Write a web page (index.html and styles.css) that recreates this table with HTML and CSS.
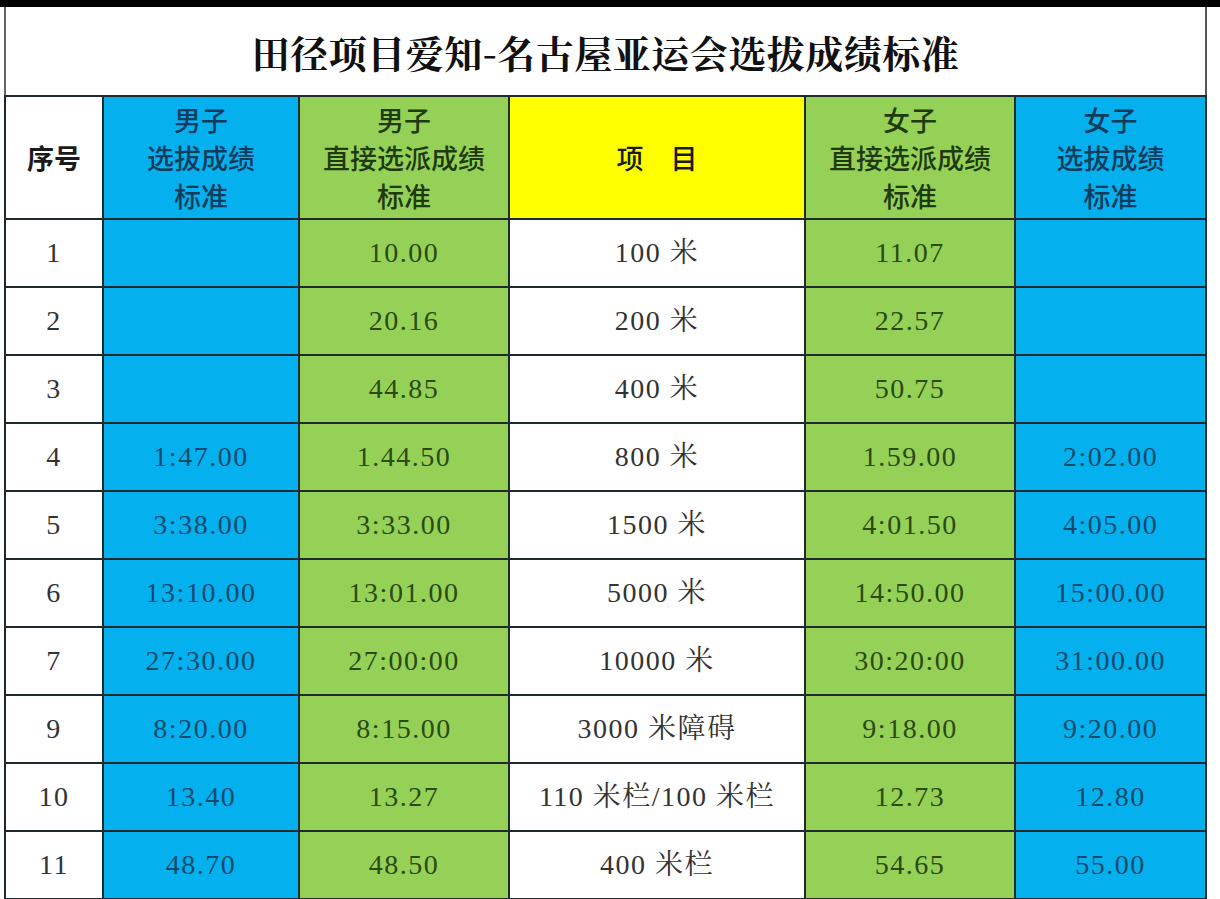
FILE: index.html
```html
<!DOCTYPE html>
<html lang="zh">
<head>
<meta charset="utf-8">
<title>田径项目爱知-名古屋亚运会选拔成绩标准</title>
<link rel="stylesheet" href="styles.css">
</head>
<body>
<div class="topbar"></div>
<table class="grid">
  <colgroup>
    <col class="c-no">
    <col class="c-m1">
    <col class="c-m2">
    <col class="c-ev">
    <col class="c-w2">
    <col class="c-w1">
  </colgroup>
  <tr class="title-row">
    <td colspan="6" class="title">田径项目爱知-名古屋亚运会选拔成绩标准</td>
  </tr>
  <tr class="head-row">
    <th class="white">序号</th>
    <th class="blue">男子<br>选拔成绩<br>标准</th>
    <th class="green">男子<br>直接选派成绩<br>标准</th>
    <th class="yellow">项&emsp;目</th>
    <th class="green">女子<br>直接选派成绩<br>标准</th>
    <th class="blue">女子<br>选拔成绩<br>标准</th>
  </tr>
  <tr><td class="white">1</td><td class="blue"></td><td class="green">10.00</td><td class="white">100 米</td><td class="green">11.07</td><td class="blue"></td></tr>
  <tr><td class="white">2</td><td class="blue"></td><td class="green">20.16</td><td class="white">200 米</td><td class="green">22.57</td><td class="blue"></td></tr>
  <tr><td class="white">3</td><td class="blue"></td><td class="green">44.85</td><td class="white">400 米</td><td class="green">50.75</td><td class="blue"></td></tr>
  <tr><td class="white">4</td><td class="blue">1:47.00</td><td class="green">1.44.50</td><td class="white">800 米</td><td class="green">1.59.00</td><td class="blue">2:02.00</td></tr>
  <tr><td class="white">5</td><td class="blue">3:38.00</td><td class="green">3:33.00</td><td class="white">1500 米</td><td class="green">4:01.50</td><td class="blue">4:05.00</td></tr>
  <tr><td class="white">6</td><td class="blue">13:10.00</td><td class="green">13:01.00</td><td class="white">5000 米</td><td class="green">14:50.00</td><td class="blue">15:00.00</td></tr>
  <tr><td class="white">7</td><td class="blue">27:30.00</td><td class="green">27:00:00</td><td class="white">10000 米</td><td class="green">30:20:00</td><td class="blue">31:00.00</td></tr>
  <tr><td class="white">9</td><td class="blue">8:20.00</td><td class="green">8:15.00</td><td class="white">3000 米障碍</td><td class="green">9:18.00</td><td class="blue">9:20.00</td></tr>
  <tr><td class="white">10</td><td class="blue">13.40</td><td class="green">13.27</td><td class="white">110 米栏/100 米栏</td><td class="green">12.73</td><td class="blue">12.80</td></tr>
  <tr><td class="white">11</td><td class="blue">48.70</td><td class="green">48.50</td><td class="white">400 米栏</td><td class="green">54.65</td><td class="blue">55.00</td></tr>
</table>
</body>
</html>
```
FILE: styles.css
```css
html, body {
  margin: 0;
  padding: 0;
  background: #ffffff;
  overflow: hidden;
}

.topbar {
  height: 7px;
  background: #000000;
}

.grid {
  margin-left: 4px;
  width: 1201px;
  border-collapse: collapse;
  table-layout: fixed;
  border-left: 2px solid #666666;
  border-right: 2px solid #555555;
}

.c-no { width: 98px; }
.c-m1 { width: 196px; }
.c-m2 { width: 210px; }
.c-ev { width: 296px; }
.c-w2 { width: 210px; }
.c-w1 { width: 191px; }

.grid td, .grid th {
  padding: 0;
  text-align: center;
  vertical-align: middle;
  border: 2px solid #1e2a2e;
}

.title-row td {
  height: 88px;
  border-top: none;
  border-left: none;
  border-right: none;
}

.title {
  font-family: "Noto Serif CJK SC", "Noto Sans CJK SC", serif;
  font-weight: 700;
  font-size: 38px;
  color: #111111;
  letter-spacing: 0.5px;
  background: #ffffff;
}

.head-row th {
  height: 121px;
  font-family: "Noto Sans CJK SC", sans-serif;
  font-weight: 500;
  font-size: 27px;
  line-height: 38px;
}

.head-row th.white {
  font-weight: 700;
  color: #1a1a1a;
}

.grid tr:not(.title-row):not(.head-row) td {
  height: 66px;
  font-family: "Liberation Serif", "Noto Serif CJK SC", "Noto Sans CJK SC", serif;
  font-size: 28px;
  line-height: 32px;
  letter-spacing: 1.5px;
}

.white { background: #ffffff; color: #333333; }
.blue { background: #05b0ee; color: #124a6c; }
.green { background: #95d157; color: #2b4a14; }
.yellow { background: #ffff00; color: #1a1a1a; }

.head-row th.blue { color: #0f3c5c; }
.head-row th.green { color: #1f3a10; }
```
